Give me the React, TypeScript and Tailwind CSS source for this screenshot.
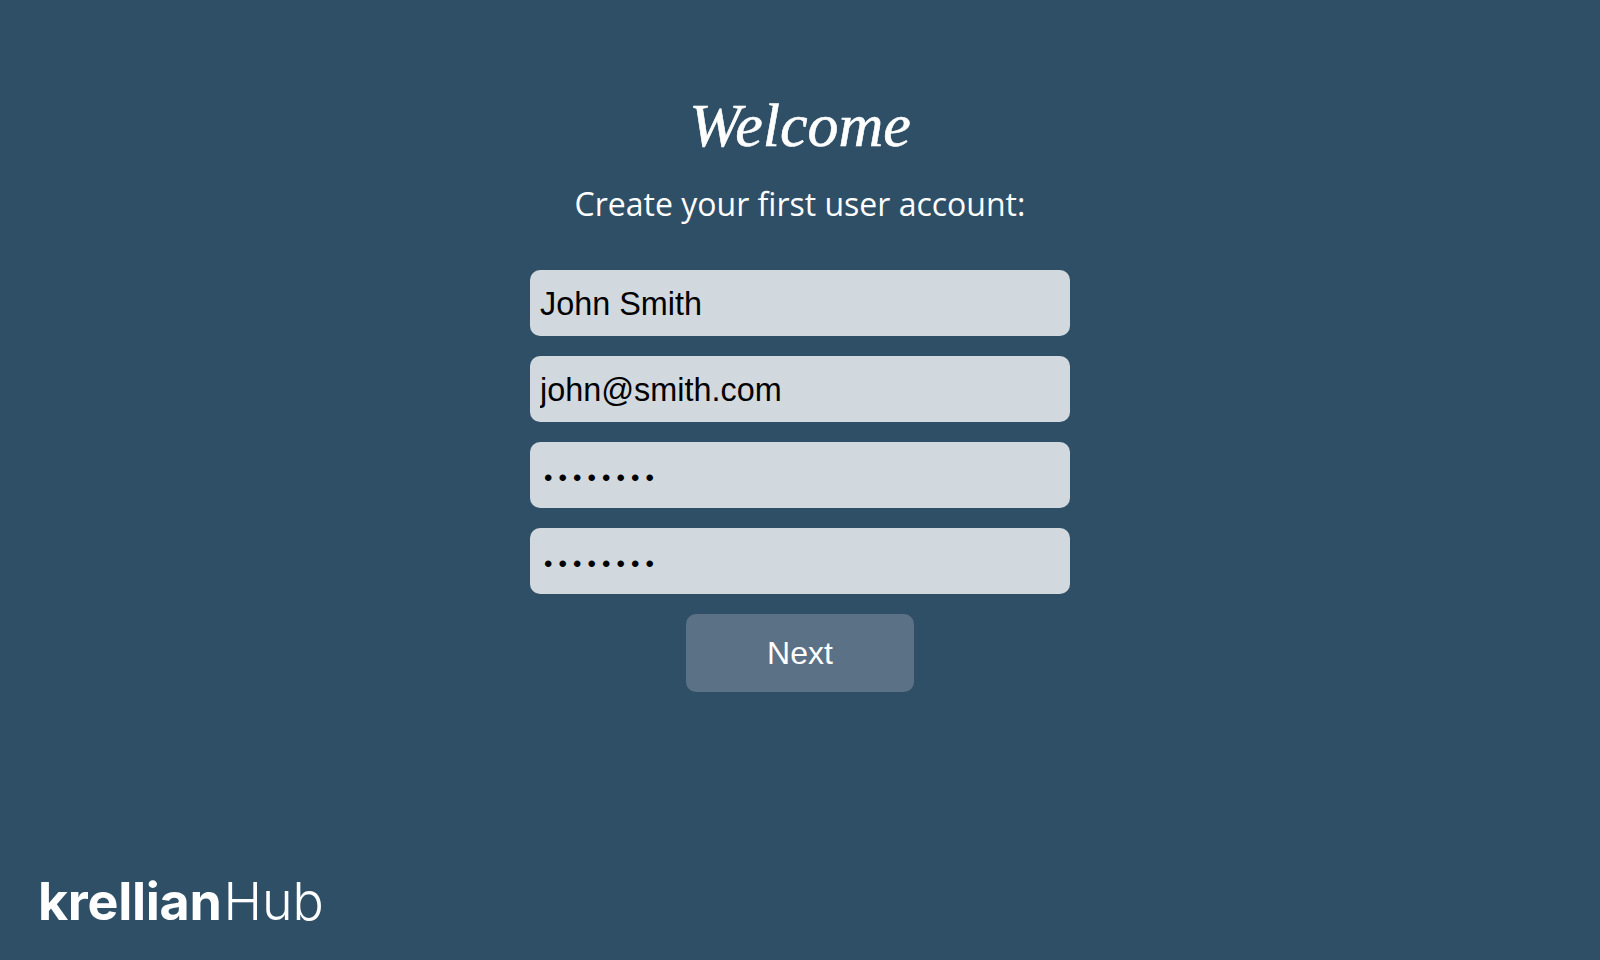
export default function App() {
  const input =
    "block h-[66px] w-[540px] rounded-[10px] bg-[#d1d8de] px-[10px] pt-[2px] text-[32.4px] text-black outline-none [font-family:'Liberation_Sans',Arial,sans-serif]";
  const pass =
    "block h-[66px] w-[540px] rounded-[10px] bg-[#d1d8de] pl-[14px] pr-[10px] pt-[5px] text-[24px] tracking-[6.1px] text-black outline-none [font-family:'Liberation_Sans',Arial,sans-serif]";
  return (
    <div className="flex h-[960px] w-full flex-col overflow-hidden bg-[#2f4f67] text-white">
      <main className="flex flex-col items-center pt-[90px]">
        <h1 className="text-[62px] leading-[70px] italic font-normal [-webkit-text-stroke:0.6px_white] [font-family:'Liberation_Serif',serif]">Welcome</h1>
        <p className="mt-[22px] text-[32px] leading-[44px] [font-family:'Open_Sans',sans-serif]">Create your first user account:</p>
        <form className="mt-[44px] flex flex-col items-center gap-5">
          <input className={input} readOnly value="John Smith" />
          <input className={input} readOnly value="john@smith.com" />
          <input className={pass} readOnly type="password" value="password" />
          <input className={pass} readOnly type="password" value="password" />
          <button type="button" className="h-[78px] w-[228px] rounded-[10px] bg-[#5b7186] text-[32px] text-white [font-family:'Liberation_Sans',Arial,sans-serif]">Next</button>
        </form>
      </main>
      <footer className="mt-auto pb-[28px] pl-[38px] text-[52px] leading-[60px] [font-family:'Inter',sans-serif]">
        <span className="font-bold tracking-[-0.3px]">krellian</span><span className="ml-[2px] font-light">Hub</span>
      </footer>
    </div>
  );
}
